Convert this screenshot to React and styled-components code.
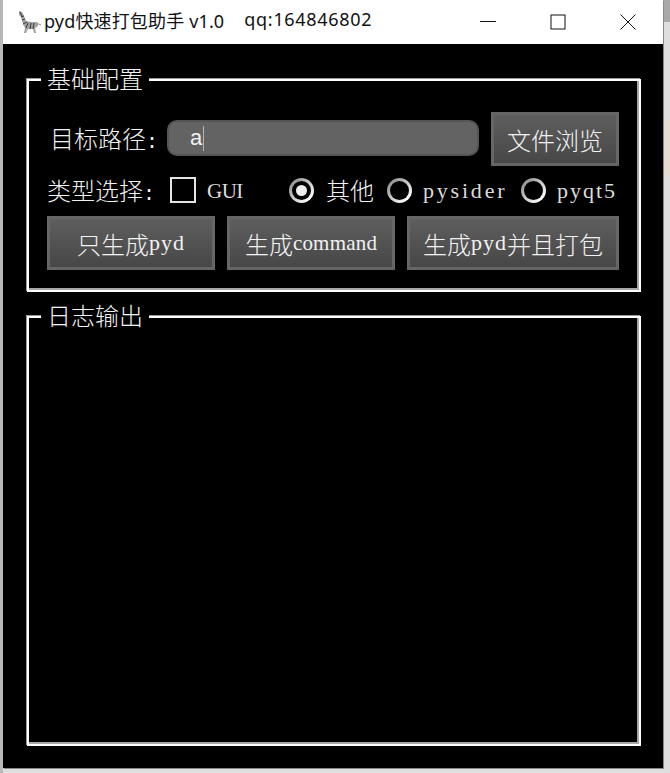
import React from "react";
import styled, { createGlobalStyle } from "styled-components";

const Global = createGlobalStyle`
  html, body { margin: 0; padding: 0; background: #dcdcdc; }
  * { box-sizing: border-box; }
`;

const CJK = `"Noto Sans CJK SC", "Liberation Sans", sans-serif`;

const Desktop = styled.div`
  width: 670px;
  height: 773px;
  padding: 0 7px 5px 3px;
  background:
    linear-gradient(#a9a9a9 0 22px, #dedede 22px 120px, #e6dccd 120px 175px, #dedede 175px) right top / 7px 100% no-repeat,
    linear-gradient(#b8b8b8, #b8b8b8) left top / 3px 100% no-repeat,
    #dedede;
`;

const Window = styled.div`
  height: 768px;
  display: flex;
  flex-direction: column;
  background: #000;
  box-shadow: 1px 1px 0 #8a8a8a;
  font-family: ${CJK};
  color: #f2f2f2;
`;

const TitleBar = styled.div`
  height: 44px;
  flex: none;
  display: flex;
  align-items: center;
  background: #fff;
  color: #111;
  padding-left: 12px;
`;

const TitleText = styled.div`
  flex: 1;
  display: flex;
  gap: 20px;
  margin-left: 3px;
  margin-top: -4px;
  font: 18px "Noto Sans", ${CJK};
  white-space: pre;
`;

const TitleName = styled.span`
  letter-spacing: 0.15px;
`;

const TitleContact = styled.span`
  letter-spacing: 0.7px;
`;

const WinButton = styled.div`
  width: 70px;
  height: 44px;
  display: flex;
  align-items: center;
  justify-content: center;
`;

const Content = styled.div`
  flex: 1;
  display: flex;
  flex-direction: column;
  gap: 24px;
  padding: 35px 22px 22px 24px;
`;

const Group = styled.section`
  position: relative;
  flex: ${(p) => (p.$grow ? 1 : "none")};
  border: 2px solid #fff;
  box-shadow: -1px -1px 0 #9a9a9a, inset -2px -2px 0 #a8a8a8;
  padding: 31px 19px 20px 18px;
`;

const Legend = styled.div`
  position: absolute;
  left: 12px;
  top: -18px;
  height: 30px;
  padding: 0 6px;
  background: #000;
  font-size: 24px;
  line-height: 30px;
  font-weight: 300;
  white-space: nowrap;
`;

const PathRow = styled.div`
  height: 54px;
  display: flex;
  align-items: center;
`;

const PathLabel = styled.div`
  width: 120px;
  padding: 0 0 4px 3px;
  font-size: 24px;
  font-weight: 300;
  white-space: nowrap;
`;

const Input = styled.div`
  width: 312px;
  height: 36px;
  margin-right: 12px;
  margin-bottom: 2px;
  padding-left: 21px;
  display: flex;
  align-items: center;
  background: #636363;
  border: 2px solid #555;
  border-radius: 10px;
  font: 22px "Liberation Sans", sans-serif;
`;

const Caret = styled.span`
  width: 1px;
  height: 25px;
  margin-left: 1px;
  background: #b5b5b5;
`;

const TypeRow = styled.div`
  height: 50px;
  display: grid;
  grid-template-columns: 123px 119px 98px 134px auto;
  align-items: center;
  font-size: 24px;
  font-weight: 300;
  white-space: nowrap;
`;

const TypeText = styled.span`
  padding-bottom: 4px;
`;

const Check = styled.div`
  width: 26px;
  height: 26px;
  flex: none;
  margin-bottom: 2px;
  border: 2px solid #e4e4e4;
`;

const Option = styled.div`
  display: flex;
  align-items: center;
  gap: ${(p) => p.$gap || 11}px;
`;

const Radio = styled.div`
  position: relative;
  width: 25px;
  height: 25px;
  flex: none;
  display: flex;
  align-items: center;
  justify-content: center;
  margin-bottom: 2px;
  border-radius: 50%;
  background: linear-gradient(135deg, #8d8d8d 10%, #ffffff 85%);
  &::before {
    content: "";
    position: absolute;
    inset: 3px;
    border-radius: 50%;
    background: #000;
  }
  &::after {
    content: "";
    position: relative;
    width: 11px;
    height: 11px;
    border-radius: 50%;
    background: ${(p) => (p.$checked ? "#eee" : "transparent")};
  }
`;

const Lat = styled.span`
  font-family: "Liberation Serif", serif;
  font-size: ${(p) => p.$size || 22}px;
  font-weight: 400;
  letter-spacing: ${(p) => p.$ls || 0}px;
  color: ${(p) => (p.$dim ? "#dcdcdc" : "inherit")};
`;

const Colon = styled.span`
  font-family: "Liberation Mono", monospace;
  font-size: 20px;
`;

const ButtonRow = styled.div`
  display: flex;
  gap: 12px;
`;

const Button = styled.button`
  width: ${(p) => p.$w}px;
  height: 54px;
  flex: none;
  padding: 0;
  display: flex;
  align-items: center;
  justify-content: center;
  background: linear-gradient(#5e5e5e, #474747);
  border: 3px solid #666;
  color: #f2f2f2;
  font-family: ${CJK};
  font-size: 24px;
  font-weight: 300;
  white-space: nowrap;
`;

const Zebra = () => (
  <svg width="26" height="26" viewBox="0 0 26 26" fill="none">
    <path d="M4 2 L7 3 L9 7 L11 12 L16 13 L22 13 L24 15 L22 18 L20 19 L21 24 L19 24 L18 20 L13 20 L11 24 L9 24 L10 19 L8 15 L6 8 L4 6 Z" fill="#a3a3a3" />
    <path d="M5 3 L7 7 M6 8 L9 7 M7 11 L10 10 M8 15 L12 13 M11 19 L13 14 M15 20 L16 14 M18 20 L19 14" stroke="#3a3a3a" strokeWidth="1" />
    <path d="M24 15 L26 16" stroke="#888" strokeWidth="1" />
  </svg>
);

export default function App() {
  return (
    <Desktop>
      <Global />
      <Window>
        <TitleBar>
          <Zebra />
          <TitleText>
            <TitleName>pyd快速打包助手 v1.0</TitleName>
            <TitleContact>qq:164846802</TitleContact>
          </TitleText>
          <WinButton>
            <svg width="16" height="16" viewBox="0 0 16 16"><path d="M0 7.5H16" stroke="#111" strokeWidth="1" /></svg>
          </WinButton>
          <WinButton>
            <svg width="16" height="16" viewBox="0 0 16 16"><rect x="1" y="1" width="14" height="14" fill="none" stroke="#111" strokeWidth="1" /></svg>
          </WinButton>
          <WinButton>
            <svg width="16" height="16" viewBox="0 0 16 16"><path d="M0.5 0.5L15.5 15.5M15.5 0.5L0.5 15.5" stroke="#111" strokeWidth="1" /></svg>
          </WinButton>
        </TitleBar>
        <Content>
          <Group>
            <Legend>基础配置</Legend>
            <PathRow>
              <PathLabel>目标路径<Colon>:</Colon></PathLabel>
              <Input>a<Caret /></Input>
              <Button $w={128}>文件浏览</Button>
            </PathRow>
            <TypeRow>
              <TypeText>类型选择<Colon>:</Colon></TypeText>
              <Option><Check /><Lat $dim $size={21} $ls={-0.5}>GUI</Lat></Option>
              <Option $gap={12}><Radio $checked /><TypeText>其他</TypeText></Option>
              <Option><Radio /><Lat $dim $ls={2.8}>pysider</Lat></Option>
              <Option><Radio /><Lat $dim $ls={2}>pyqt5</Lat></Option>
            </TypeRow>
            <ButtonRow>
              <Button $w={168}>只生成<Lat $ls={1}>pyd</Lat></Button>
              <Button $w={168}>生成<Lat $size={21} $ls={0.2}>command</Lat></Button>
              <Button $w={212}>生成<Lat $ls={1}>pyd</Lat>并且打包</Button>
            </ButtonRow>
          </Group>
          <Group $grow>
            <Legend>日志输出</Legend>
          </Group>
        </Content>
      </Window>
    </Desktop>
  );
}
